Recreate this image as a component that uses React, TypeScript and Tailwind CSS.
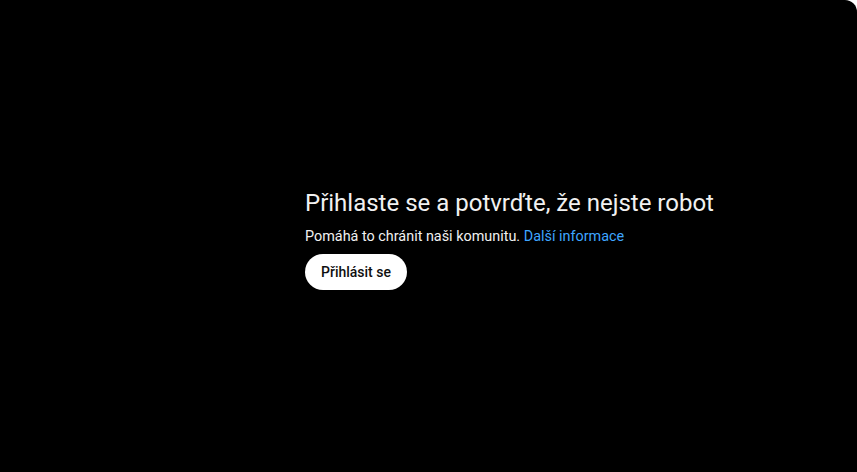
export default function App() {
  return (
    <div className="h-screen w-full bg-white">
      <div className="h-full w-full bg-black rounded-tr-xl pt-[187px] pl-[305px] font-['Roboto',sans-serif] text-[#f1f1f1]">
        <h1 className="text-[24px] leading-[32px] font-normal">
          Přihlaste se a potvrďte, že nejste robot
        </h1>
        <p className="mt-[8px] text-[14.4px] leading-[20px]">
          Pomáhá to chránit naši komunitu.{' '}
          <a href="#" className="text-[#3ea6ff]">
            Další informace
          </a>
        </p>
        <button className="mt-[7px] h-9 px-4 rounded-full bg-white text-[#0f0f0f] text-[14px] font-medium">
          Přihlásit se
        </button>
      </div>
    </div>
  );
}
